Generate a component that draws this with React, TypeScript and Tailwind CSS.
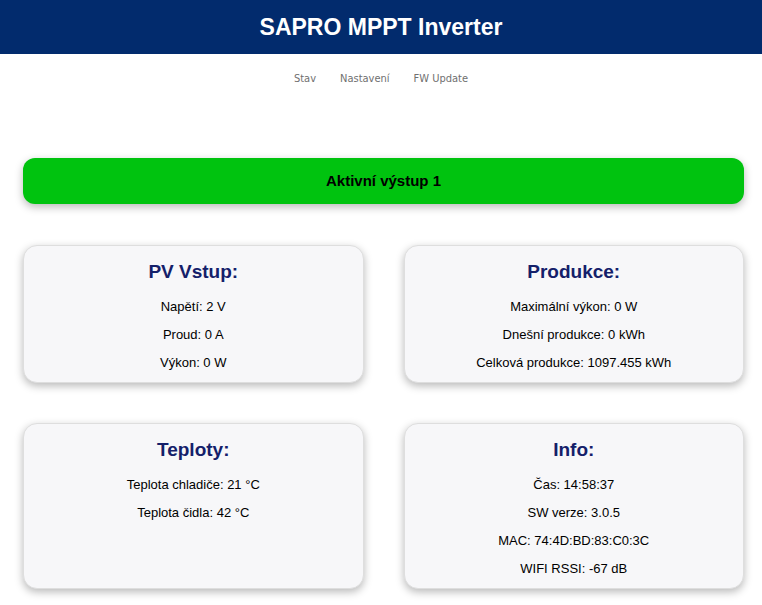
const cards = [
  {
    title: "PV Vstup:",
    lines: ["Napětí: 2 V", "Proud: 0 A", "Výkon: 0 W"],
  },
  {
    title: "Produkce:",
    lines: ["Maximální výkon: 0 W", "Dnešní produkce: 0 kWh", "Celková produkce: 1097.455 kWh"],
  },
  {
    title: "Teploty:",
    lines: ["Teplota chladiče: 21 °C", "Teplota čidla: 42 °C"],
  },
  {
    title: "Info:",
    lines: ["Čas: 14:58:37", "SW verze: 3.0.5", "MAC: 74:4D:BD:83:C0:3C", "WIFI RSSI: -67 dB"],
  },
];

function Card({ title, lines }: { title: string; lines: string[] }) {
  return (
    <div className="bg-[#f7f7f9] border border-[#dedede] rounded-[14px] shadow-[0_3px_8px_rgba(0,0,0,0.28)] pt-[11px] pb-[5px] text-center">
      <h2 className="h-[30px] leading-[30px] text-[19px] font-bold text-[#14206a] mb-[6px]">{title}</h2>
      {lines.map((l) => (
        <div key={l} className="h-[28px] leading-[28px] text-[13px] text-black">
          {l}
        </div>
      ))}
    </div>
  );
}

export default function App() {
  return (
    <div className="min-h-[605px] bg-white font-['Liberation_Sans',Arial,sans-serif]">
      {/* Header */}
      <header className="h-[54px] bg-[#022b6d] flex items-center justify-center">
        <h1 className="text-[23px] font-bold text-white">SAPRO MPPT Inverter</h1>
      </header>

      {/* Nav */}
      <nav className="h-[48px] flex items-center justify-center gap-[24px] font-['DejaVu_Sans_Condensed','DejaVu_Sans',sans-serif] text-[11px] text-[#707070] pt-[3px]">
        <span>Stav</span>
        <span>Nastavení</span>
        <span>FW Update</span>
      </nav>

      <main className="pl-[23px] pr-[18px] pt-[56px]">
        <div className="h-[46px] bg-[#00c30f] rounded-[12px] shadow-[0_3px_8px_rgba(0,0,0,0.28)] flex items-center justify-center">
          <span className="text-[15px] font-bold text-black pt-[1px]">Aktivní výstup 1</span>
        </div>

        <div className="grid grid-cols-2 gap-x-[40px] gap-y-[40px] mt-[41px]">
          {cards.map((c) => (
            <Card key={c.title} title={c.title} lines={c.lines} />
          ))}
        </div>
      </main>
    </div>
  );
}
